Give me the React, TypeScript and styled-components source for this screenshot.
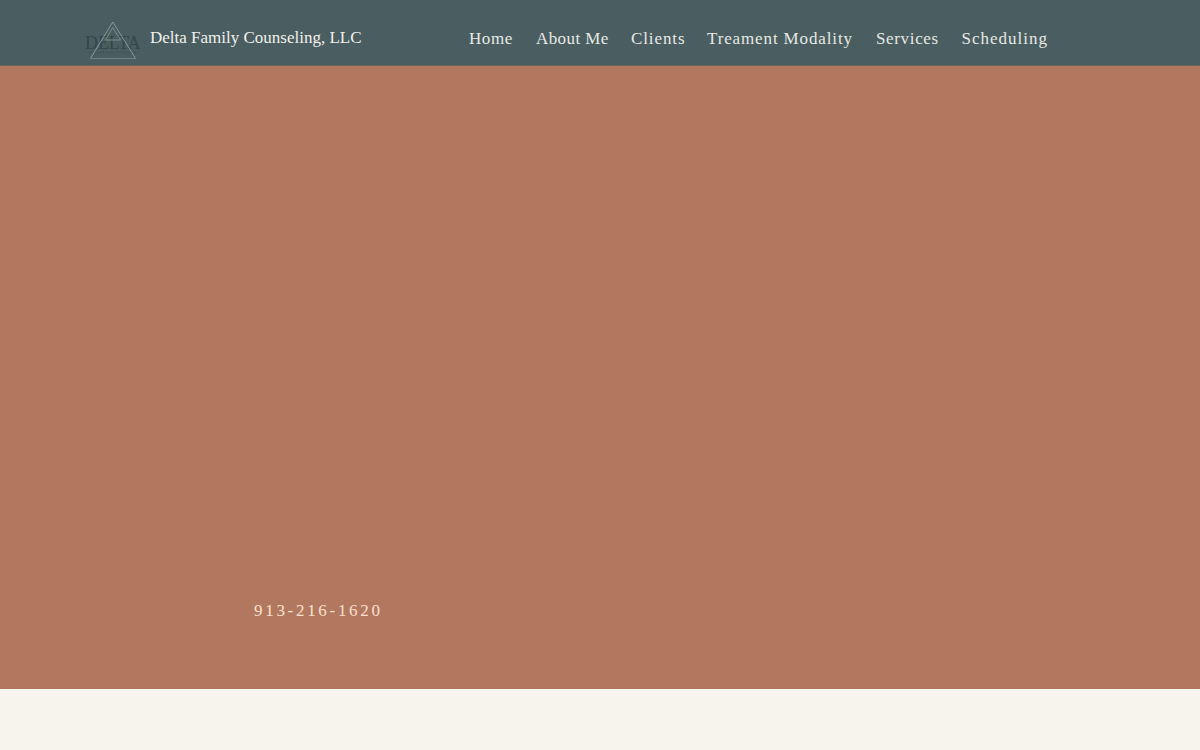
import React from "react";
import styled, { createGlobalStyle } from "styled-components";

const GlobalStyle = createGlobalStyle`
  body {
    margin: 0;
    background: #f7f4ed;
    font-family: "Liberation Serif", "Times New Roman", serif;
  }
`;

const Page = styled.div`
  height: 750px;
  display: flex;
  flex-direction: column;
  overflow: hidden;
`;

const Header = styled.header`
  height: 66px;
  flex: none;
  box-sizing: border-box;
  padding-left: 84px;
  display: flex;
  align-items: flex-start;
  background: #4a5d60;
  border-bottom: 1px solid #6a635f;
`;

const Logo = styled.svg`
  width: 58px;
  height: 44px;
  margin-top: 18px;
  flex: none;
`;

const Brand = styled.a`
  width: 319px;
  margin: 28px 0 0 8px;
  flex: none;
  font-size: 17px;
  line-height: 20px;
  white-space: nowrap;
  color: #f1f1ec;
`;

const Nav = styled.nav`
  display: flex;
  margin-top: 29px;
`;

const NavLink = styled.a<{ $width: number; $spacing: number }>`
  width: ${(p) => p.$width}px;
  flex: none;
  font-size: 17px;
  line-height: 20px;
  letter-spacing: ${(p) => p.$spacing}px;
  white-space: nowrap;
  color: #e6e9e5;
`;

const Hero = styled.main`
  height: 623px;
  flex: none;
  box-sizing: border-box;
  padding: 0 0 68px 254px;
  display: flex;
  align-items: flex-end;
  background: #b2775f;
`;

const Phone = styled.a`
  font-size: 17px;
  line-height: 20px;
  letter-spacing: 2.7px;
  color: #f9e0ce;
`;

const links = [
  { label: "Home", width: 67, spacing: 0.55 },
  { label: "About Me", width: 95, spacing: 0.4 },
  { label: "Clients", width: 76, spacing: 0.9 },
  { label: "Treament Modality", width: 169, spacing: 0.87 },
  { label: "Services", width: 85.5, spacing: 0.65 },
  { label: "Scheduling", width: 90, spacing: 1 },
];

export default function App() {
  return (
    <>
      <GlobalStyle />
      <Page>
        <Header>
          <Logo viewBox="0 0 58 44" aria-label="Delta">
            <text x="1" y="31" fontSize="18" textLength="55.5" fill="#36464a">
              DELTA
            </text>
            <path
              d="M4 34.5 H54"
              fill="none"
              stroke="#3d4d4f"
              strokeWidth="1.4"
              strokeDasharray="1.6 1.3"
              opacity="0.6"
            />
            <g fill="none" stroke="#8a9999" strokeWidth="1">
              <path d="M6.3 40.7 L28.8 4 L51.7 40.7" />
              <path d="M6.3 40.6 H51.7" stroke="#718383" />
              <path d="M21.5 22 L28.8 9.5 L36.5 22 Z" stroke="#7c8c8b" />
            </g>
          </Logo>
          <Brand>Delta Family Counseling, LLC</Brand>
          <Nav>
            {links.map((l) => (
              <NavLink key={l.label} $width={l.width} $spacing={l.spacing}>
                {l.label}
              </NavLink>
            ))}
          </Nav>
        </Header>
        <Hero>
          <Phone>913-216-1620</Phone>
        </Hero>
      </Page>
    </>
  );
}
